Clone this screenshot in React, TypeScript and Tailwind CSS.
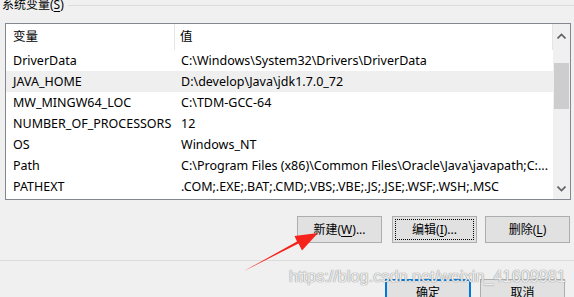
const rows = [
  { name: 'DriverData', value: 'C:\\Windows\\System32\\Drivers\\DriverData' },
  { name: 'JAVA_HOME', value: 'D:\\develop\\Java\\jdk1.7.0_72', selected: true },
  { name: 'MW_MINGW64_LOC', value: 'C:\\TDM-GCC-64' },
  { name: 'NUMBER_OF_PROCESSORS', value: '12' },
  { name: 'OS', value: 'Windows_NT' },
  { name: 'Path', value: 'C:\\Program Files (x86)\\Common Files\\Oracle\\Java\\javapath;C:...' },
  { name: 'PATHEXT', value: '.COM;.EXE;.BAT;.CMD;.VBS;.VBE;.JS;.JSE;.WSF;.WSH;.MSC' },
];

function Chevron({ down }: { down?: boolean }) {
  return (
    <svg width="9" height="6" viewBox="0 0 9 6">
      <path
        d={down ? 'M0.5 0.5 L4.5 4.5 L8.5 0.5' : 'M0.5 5.5 L4.5 1.5 L8.5 5.5'}
        fill="none"
        stroke="#606060"
        strokeWidth="1.6"
      />
    </svg>
  );
}

function Btn({ label, hot, rest, focus }: { label: string; hot: string; rest: string; focus?: boolean }) {
  return (
    <div className="w-[85px] h-[27px] border border-[#adadad] bg-[#e1e1e1] p-[2px]">
      <div
        className={
          'h-full flex items-center justify-center ' +
          (focus ? 'border border-dotted border-black' : 'border border-transparent')
        }
      >
        {label}(<span className="underline underline-offset-2">{hot}</span>){rest}
      </div>
    </div>
  );
}

export default function App() {
  return (
    <div className="relative w-[574px] h-[297px] overflow-hidden bg-[#f0f0f0] text-[12.5px] text-black font-['Noto_Sans','Noto_Sans_CJK_SC',sans-serif]">
      {/* group title */}
      <div className="h-[23px] flex items-start">
        <span className="ml-[2px] mt-[-3px] leading-[16px] text-[12px]">
          系统变量(<span className="underline underline-offset-2">S</span>)
        </span>
        <div className="flex-1 ml-[4px] mt-[5px] border-t border-[#dcdcdc]" />
      </div>

      {/* list view */}
      <div className="ml-[5px] w-[566px] h-[177px] border border-[#828790] bg-white flex">
        <div className="flex-1 flex flex-col">
          <div className="h-[26px] flex items-center border-r border-[#e5e5e5]">
            <div className="w-[169px] h-full pl-[7px] pt-[1px] flex items-center border-r border-[#e5e5e5]">变量</div>
            <div className="pl-[5px] pt-[1px]">值</div>
          </div>
          {rows.map((r) => (
            <div
              key={r.name}
              className={'h-[21px] pt-[1px] flex items-center whitespace-nowrap ' + (r.selected ? 'bg-[#efefef]' : '')}
            >
              <div className="w-[169px] pl-[7px]">{r.name}</div>
              <div className="pl-[6px]">{r.value}</div>
            </div>
          ))}
        </div>
        <div className="w-[17px] bg-[#f0f0f0] flex flex-col items-center">
          <div className="h-[22px] flex items-center justify-center pt-[2px]">
            <Chevron />
          </div>
          <div className="mt-[17px] w-[15px] h-[46px] bg-[#cdcdcd]" />
          <div className="flex-1" />
          <div className="h-[20px] flex items-center justify-center">
            <Chevron down />
          </div>
        </div>
      </div>

      {/* action buttons */}
      <div className="mt-[16px] flex pl-[297px] text-[12px]">
        <Btn label="新建" hot="W" rest="..." />
        <div className="ml-[10px]">
          <Btn label="编辑" hot="I" rest="..." focus />
        </div>
        <div className="ml-[8px]">
          <Btn label="删除" hot="L" rest="" />
        </div>
      </div>

      <div className="mt-[17px] border-t border-[#dcdcdc]" />

      {/* dialog buttons */}
      <div className="mt-[18px] flex pl-[385px] text-[12px]">
        <div className="w-[86px] h-[27px] border-2 border-[#0078d7] bg-[#e1e1e1] flex items-center justify-center">确定</div>
        <div className="ml-[9px] w-[85px] h-[27px] border border-[#adadad] bg-[#e1e1e1] flex items-center justify-center">取消</div>
      </div>

      {/* watermark */}
      <div className="absolute left-[289px] top-[264px] text-[16.3px] font-['Liberation_Sans',sans-serif] text-white/85 [text-shadow:0_0_1px_#8a8a8a,0_0_1px_#8a8a8a] whitespace-nowrap">
        https://blog.csdn.net/weixin_41609981
      </div>

      {/* red arrow */}
      <svg className="absolute left-0 top-0 pointer-events-none" width="574" height="297">
        <polygon
          points="244,271 298.5,243.5 302,250.5 318,233 294.5,236 297,241.5"
          fill="#f5231b"
        />
      </svg>
    </div>
  );
}
